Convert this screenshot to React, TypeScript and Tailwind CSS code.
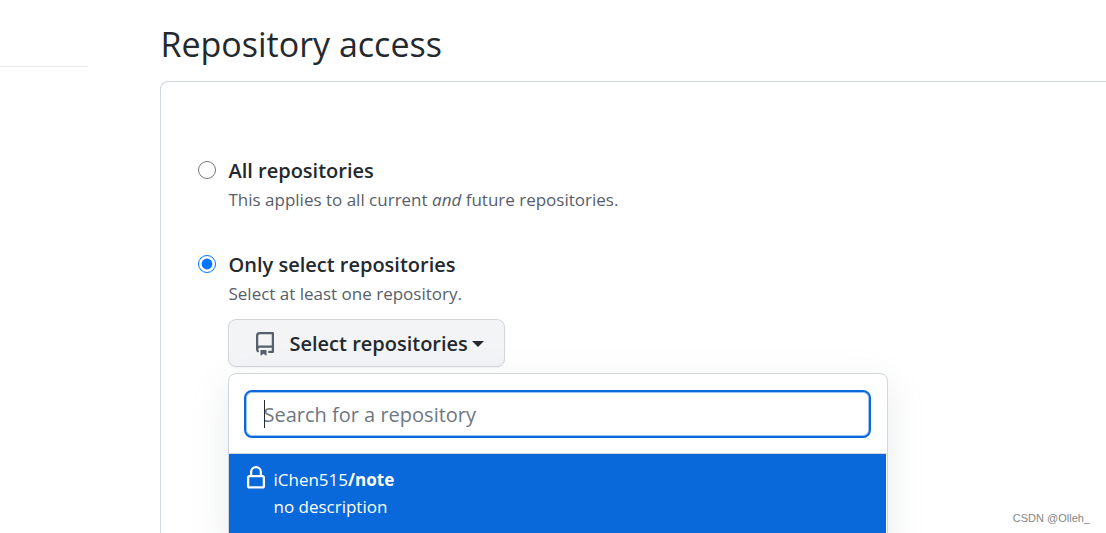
import { useState } from 'react';

type Access = 'all' | 'selected';

const repositories = [{ owner: 'iChen515', name: 'note', description: 'no description' }];

function RepoIcon() {
  return (
    <svg aria-hidden="true" viewBox="0 0 16 16" className="size-6 shrink-0 fill-[#57606a]">
      <path d="M2 2.5A2.5 2.5 0 0 1 4.5 0h8.75a.75.75 0 0 1 .75.75v12.5a.75.75 0 0 1-.75.75h-2.5a.75.75 0 0 1 0-1.5h1.75v-2h-8a1 1 0 0 0-.714 1.7.75.75 0 1 1-1.072 1.05A2.495 2.495 0 0 1 2 11.5Zm10.5-1h-8a1 1 0 0 0-1 1v6.708A2.486 2.486 0 0 1 4.5 9h8ZM5 12.25a.25.25 0 0 1 .25-.25h3.5a.25.25 0 0 1 .25.25v3.25a.25.25 0 0 1-.4.2l-1.45-1.087a.249.249 0 0 0-.3 0L5.4 15.7a.25.25 0 0 1-.4-.2Z" />
    </svg>
  );
}

function LockIcon() {
  return (
    <svg aria-hidden="true" viewBox="0 0 16 16" className="size-6 shrink-0 fill-white">
      <path d="M4 4a4 4 0 0 1 8 0v2h.25c.966 0 1.75.784 1.75 1.75v5.5A1.75 1.75 0 0 1 12.25 15h-8.5A1.75 1.75 0 0 1 2 13.25v-5.5C2 6.784 2.784 6 3.75 6H4Zm8.25 3.5h-8.5a.25.25 0 0 0-.25.25v5.5c0 .138.112.25.25.25h8.5a.25.25 0 0 0 .25-.25v-5.5a.25.25 0 0 0-.25-.25ZM10.5 6V4a2.5 2.5 0 1 0-5 0v2Z" />
    </svg>
  );
}

export default function App() {
  const [access, setAccess] = useState<Access>('selected');
  const [open, setOpen] = useState(true);
  const [query, setQuery] = useState('');

  const matches = repositories.filter((repo) =>
    `${repo.owner}/${repo.name}`.toLowerCase().includes(query.toLowerCase())
  );

  return (
    <div className="relative flex h-screen overflow-hidden bg-white font-['Segoe_UI','Open_Sans',sans-serif] text-[#24292f]">
      <div className="w-[8%] shrink-0">
        <hr className="mt-[66px] border-[#e8eaed]" />
      </div>

      <main className="ml-18 flex min-w-0 flex-1 flex-col pt-5">
        <h1 className="text-[34px] leading-[48px]">Repository access</h1>

        <section className="mt-[13px] flex-1 rounded-tl-lg border-t border-l border-[#d0d7de] pt-[74px] pl-[37px]">
          <div className="flex gap-3">
            <input
              id="access-all"
              type="radio"
              name="access"
              checked={access === 'all'}
              onChange={() => setAccess('all')}
              className="mt-[5px] size-[18px] shrink-0 accent-[#0075ff]"
            />
            <div>
              <label htmlFor="access-all" className="block text-xl leading-[30px] font-semibold">
                All repositories
              </label>
              <p className="text-[17px] leading-7 text-[#57606a]">
                This applies to all current <em>and</em> future repositories.
              </p>
            </div>
          </div>

          <div className="mt-9 flex gap-3">
            <input
              id="access-selected"
              type="radio"
              name="access"
              checked={access === 'selected'}
              onChange={() => setAccess('selected')}
              className="mt-[5px] size-[18px] shrink-0 accent-[#0075ff]"
            />
            <div className="min-w-0 flex-1">
              <label htmlFor="access-selected" className="block text-xl leading-[30px] font-semibold">
                Only select repositories
              </label>
              <p className="text-[17px] leading-7 text-[#57606a]">Select at least one repository.</p>

              <button
                type="button"
                aria-expanded={open}
                onClick={() => setOpen(!open)}
                className="mt-[11px] flex h-12 items-center rounded-lg border border-[#d3d6da] bg-[#f3f4f6] pt-0.5 pr-5 pl-6 text-xl font-semibold shadow-xs"
              >
                <RepoIcon />
                <span className="ml-3">Select repositories</span>
                <span className="ml-1 border-x-6 border-t-6 border-x-transparent border-t-[#24292f]" />
              </button>

              {open && (
                <div className="mt-1.5 max-w-[660px] rounded-lg border border-[#d0d7de] bg-white shadow-[0_12px_36px_rgba(140,149,159,0.2)]">
                  <div className="border-b border-[#d0d7de] pt-4 pr-4 pb-[15px] pl-[15px]">
                    <div className="relative">
                      <input
                        type="text"
                        aria-label="Search for a repository"
                        placeholder="Search for a repository"
                        value={query}
                        onChange={(e) => setQuery(e.target.value)}
                        className="block h-12 w-full rounded-lg border-2 border-[#0969da] px-[17px] text-xl placeholder-[#6e7781] caret-transparent inset-ring inset-ring-[#0969da]/40 outline-none"
                      />
                      {query === '' && <span className="absolute top-2.5 left-5 h-7 w-px bg-[#24292f]" />}
                    </div>
                  </div>
                  <ul>
                    {matches.map((repo) => (
                      <li key={repo.name} className="mr-px">
                        <button
                          type="button"
                          className="flex w-full gap-[5px] bg-[#0969da] px-[15px] pt-3 pb-6 text-left text-[17px] leading-[27px] text-white"
                        >
                          <LockIcon />
                          <span>
                            <span className="block">
                              {repo.owner}
                              <strong className="font-bold">/{repo.name}</strong>
                            </span>
                            <span className="block">{repo.description}</span>
                          </span>
                        </button>
                      </li>
                    ))}
                  </ul>
                </div>
              )}
            </div>
          </div>
        </section>
      </main>

      <span className="absolute right-4 bottom-[7px] font-['Liberation_Sans',sans-serif] text-[11px] leading-4 text-[#858585]">
        CSDN @Olleh_
      </span>
    </div>
  );
}
